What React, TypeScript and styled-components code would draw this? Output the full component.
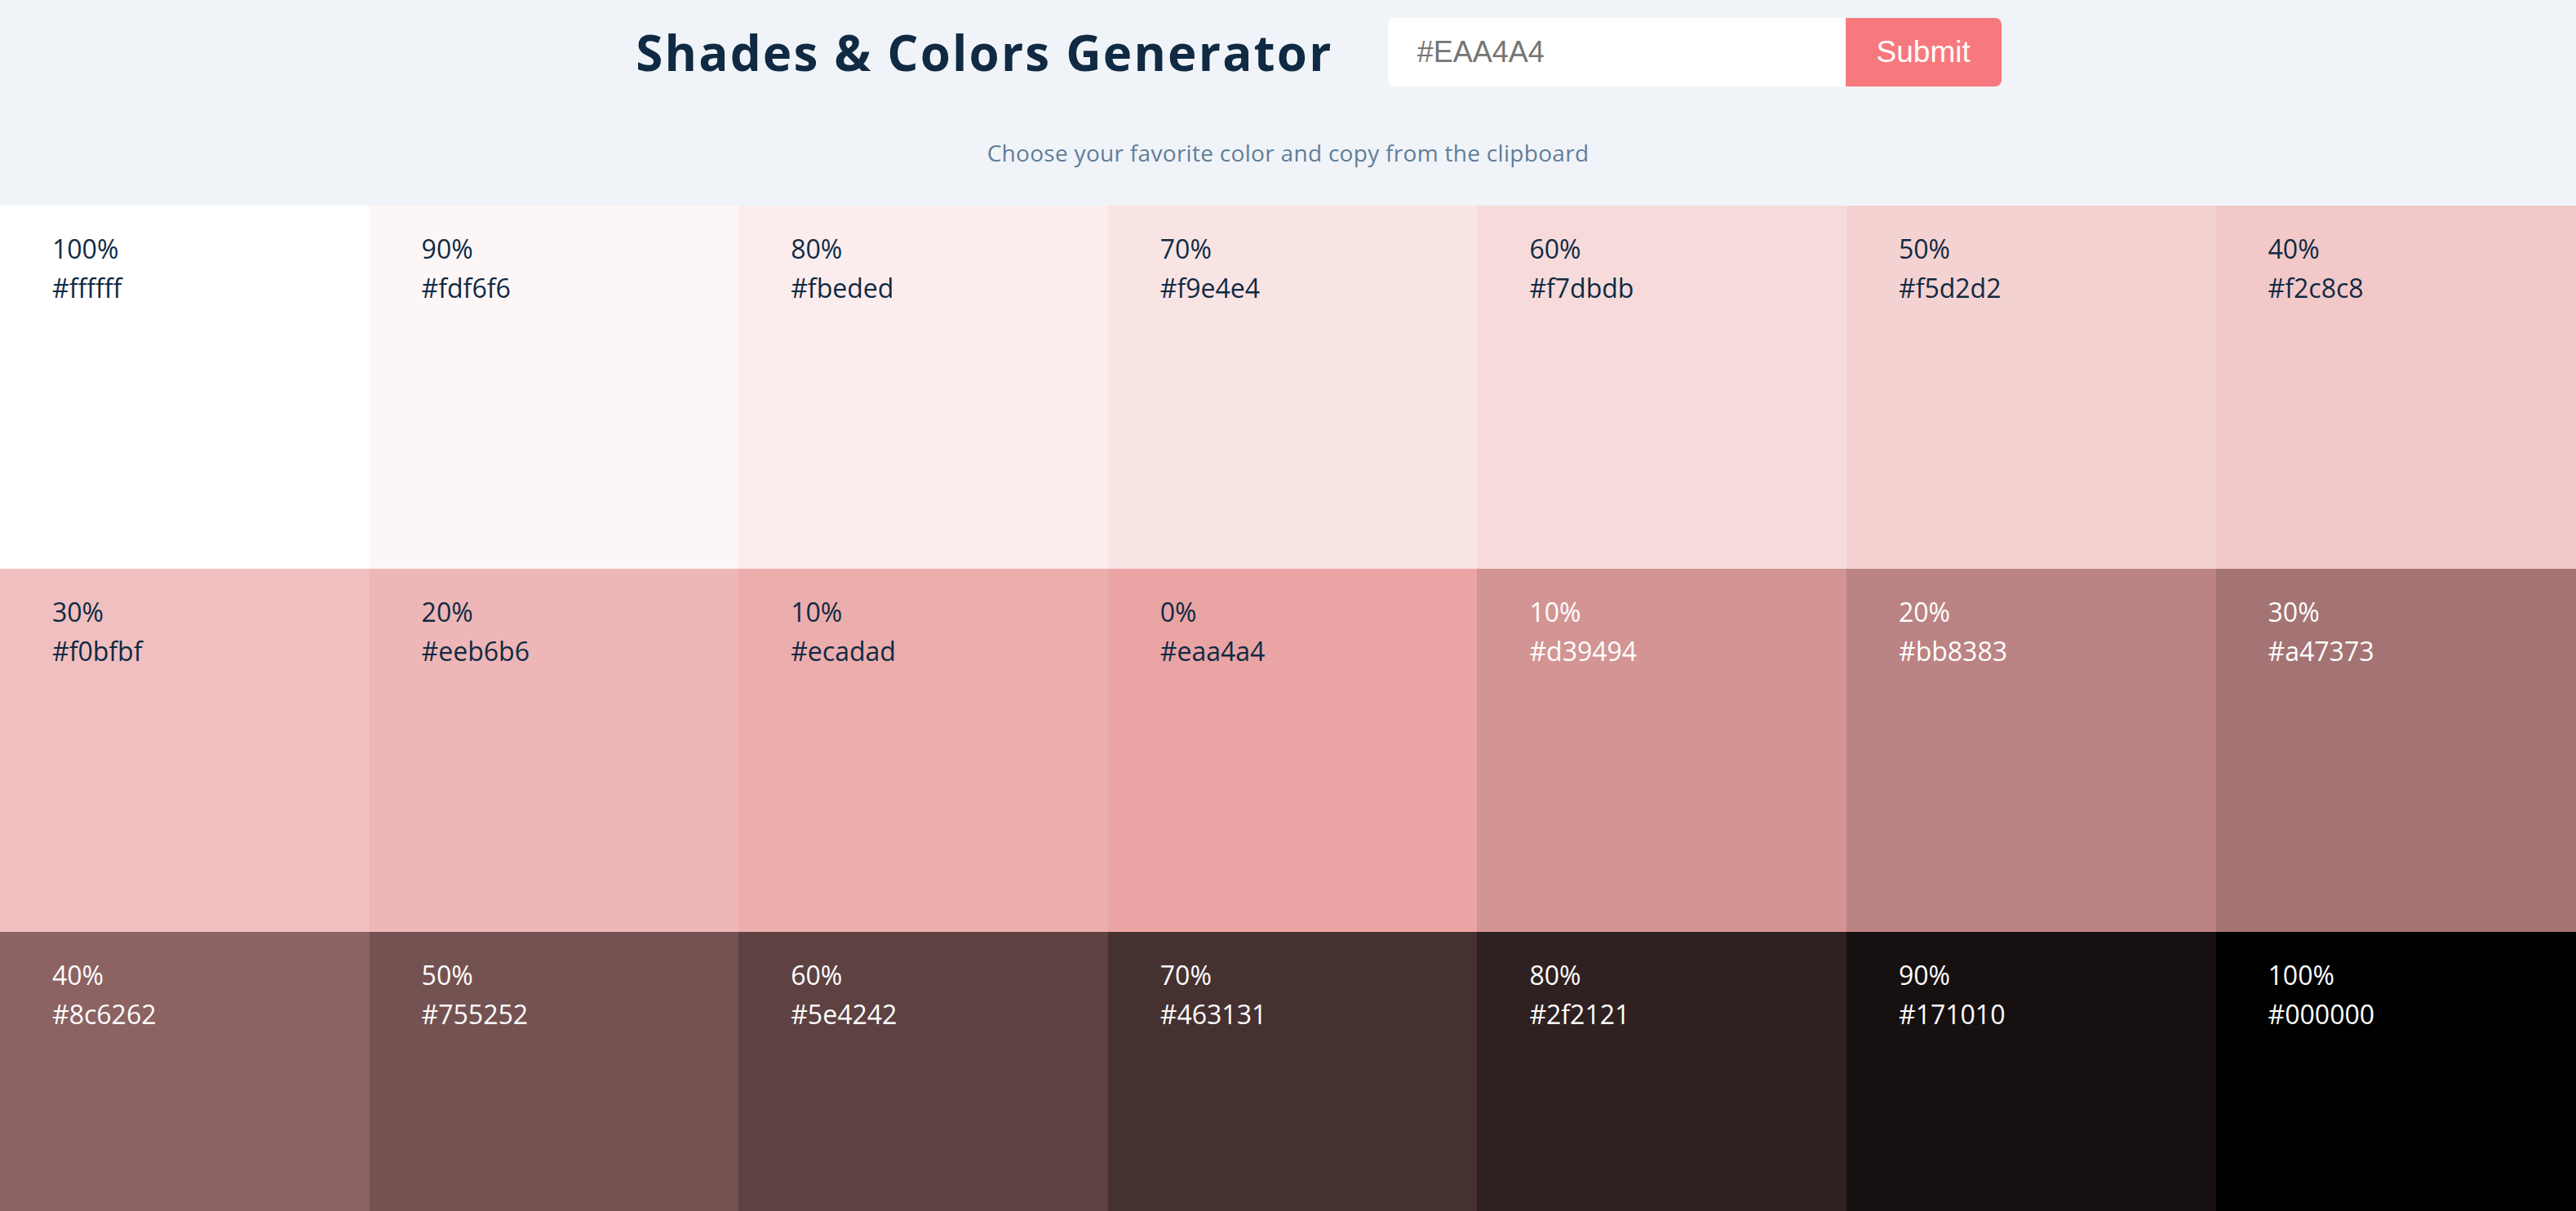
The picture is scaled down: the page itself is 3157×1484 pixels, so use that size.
import React from "react";
import styled, { createGlobalStyle } from "styled-components";

const shades = [
  { weight: "100%", hex: "#ffffff", dark: false },
  { weight: "90%", hex: "#fdf6f6", dark: false },
  { weight: "80%", hex: "#fbeded", dark: false },
  { weight: "70%", hex: "#f9e4e4", dark: false },
  { weight: "60%", hex: "#f7dbdb", dark: false },
  { weight: "50%", hex: "#f5d2d2", dark: false },
  { weight: "40%", hex: "#f2c8c8", dark: false },
  { weight: "30%", hex: "#f0bfbf", dark: false },
  { weight: "20%", hex: "#eeb6b6", dark: false },
  { weight: "10%", hex: "#ecadad", dark: false },
  { weight: "0%", hex: "#eaa4a4", dark: false },
  { weight: "10%", hex: "#d39494", dark: true },
  { weight: "20%", hex: "#bb8383", dark: true },
  { weight: "30%", hex: "#a47373", dark: true },
  { weight: "40%", hex: "#8c6262", dark: true },
  { weight: "50%", hex: "#755252", dark: true },
  { weight: "60%", hex: "#5e4242", dark: true },
  { weight: "70%", hex: "#463131", dark: true },
  { weight: "80%", hex: "#2f2121", dark: true },
  { weight: "90%", hex: "#171010", dark: true },
  { weight: "100%", hex: "#000000", dark: true },
];

const App = () => {
  return (
    <Page>
      <GlobalStyle />
      <Header>
        <Row>
          <Title>Shades &amp; Colors Generator</Title>
          <Form onSubmit={(e) => e.preventDefault()}>
            <ColorInput type="text" placeholder="#EAA4A4" />
            <SubmitButton type="submit">Submit</SubmitButton>
          </Form>
        </Row>
        <Subtitle>Choose your favorite color and copy from the clipboard</Subtitle>
      </Header>
      <Grid>
        {shades.map((s, i) => (
          <Tile key={i} $bg={s.hex} $dark={s.dark}>
            <Weight>{s.weight}</Weight>
            <Hex>{s.hex}</Hex>
          </Tile>
        ))}
      </Grid>
    </Page>
  );
};

export default App;

const GlobalStyle = createGlobalStyle`
  * {
    box-sizing: border-box;
  }
  body {
    margin: 0;
    background: #f0f4f8;
    font-family: "Open Sans", "Noto Sans", sans-serif;
    color: #102a43;
  }
`;

const Page = styled.main`
  width: 100%;
  overflow-x: hidden;
`;

const Header = styled.section`
  background: #f0f4f8;
  padding: 22px 0 44px;
`;

const Row = styled.div`
  display: flex;
  justify-content: center;
  align-items: center;
  gap: 67px;
  padding-left: 75px;
`;

const Title = styled.h3`
  margin: 0;
  font-size: 60px;
  font-weight: 700;
  letter-spacing: 2.2px;
  color: #102a43;
  white-space: nowrap;
`;

const Form = styled.form`
  display: flex;
  height: 84px;
`;

const ColorInput = styled.input`
  width: 561px;
  height: 100%;
  border: none;
  outline: none;
  background: #fff;
  border-radius: 8px 0 0 8px;
  padding: 0 36px;
  font-family: "Liberation Sans", Arial, sans-serif;
  font-size: 36px;
  color: #102a43;

  &::placeholder {
    color: #757575;
  }
`;

const SubmitButton = styled.button`
  width: 191px;
  height: 100%;
  border: none;
  background: #f7797d;
  color: #fff;
  border-radius: 0 8px 8px 0;
  font-family: "Liberation Sans", Arial, sans-serif;
  font-size: 37px;
  cursor: pointer;
`;

const Subtitle = styled.p`
  margin: 60px 0 0;
  text-align: center;
  font-size: 28px;
  line-height: 42px;
  letter-spacing: 0.3px;
  color: #627d98;
`;

const Grid = styled.section`
  display: grid;
  grid-template-columns: repeat(7, 452.6px);
`;

const Tile = styled.article<{ $bg: string; $dark: boolean }>`
  height: 445px;
  padding: 29px 64px;
  background: ${(p) => p.$bg};
  color: ${(p) => (p.$dark ? "#fff" : "#102a43")};
  font-size: 32px;
  line-height: 48px;
`;

const Weight = styled.p`
  margin: 0;
`;

const Hex = styled.p`
  margin: 0;
`;
